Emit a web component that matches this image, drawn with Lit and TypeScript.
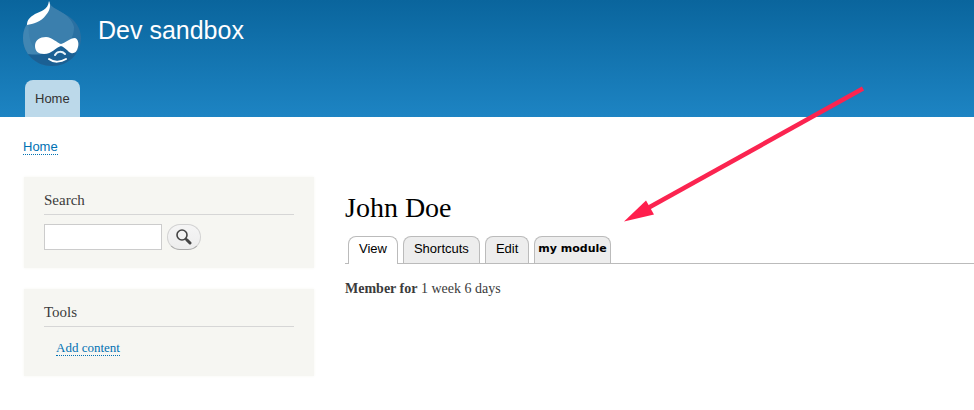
import { LitElement, html, css } from "lit";
import { customElement, state } from "lit/decorators.js";
import { classMap } from "lit/directives/class-map.js";

@customElement("site-logo")
class SiteLogo extends LitElement {
  static styles = css`
    :host { display: block; }
    svg { display: block; width: 58px; height: 66px; }
  `;
  render() {
    return html`
      <svg viewBox="0 0 58 66" role="img" aria-label="Site logo">
        <defs>
          <clipPath id="drop">
            <path d="M26 1C27 5 29 7 33 9C37 11 41 14 45 16C53 21 58 29 58 38C58 54 45 66 29 66C13 66 0 54 0 38C0 29 4 21 12 17C18 14 25 10 26 1Z" />
          </clipPath>
        </defs>
        <g clip-path="url(#drop)">
          <rect width="58" height="66" fill="#2a70a2" />
          <path d="M0 16H12C6 30 10 46 22 55L0 54Z" fill="#4186b3" />
          <path d="M26 0C34 10 49 16 51 27C51 35 48 41 42 46L22 55C8 50 4 38 6 20Z" fill="#3b7fad" />
          <path d="M0 53C10 56 20 55 28 51C33 48 36 45 40 47C46 51 49 54 53 53L58 50V66H0Z" fill="#1b6094" />
        </g>
        <path d="M26 1C28 6 27 10 23 15C18 22 10 24 4 25C4 20 7 17 12 14C18 11 25 10 26 1Z" fill="#fff" />
        <path d="M23 37C29 37 34 43 38 44C42 43 47 38 52 38C55 39 56 43 55 47C54 52 51 54 48 53C45 52 42 47 38 46C33 47 29 54 21 54C15 54 12 51 12 46C12 40 17 37 23 37Z" fill="#fff" />
        <path d="M32 55C34 51 39 51 42 54" fill="none" stroke="#e8f3fa" stroke-width="2" stroke-linecap="round" />
        <path d="M26 59C31 63 38 62 43 59" fill="none" stroke="#fff" stroke-width="2" stroke-linecap="round" />
      </svg>
    `;
  }
}

@customElement("side-block")
class SideBlock extends LitElement {
  static properties = { heading: { type: String } };
  declare heading: string;
  static styles = css`
    :host {
      display: block;
      padding: 15px 20px 18px;
      background: #f6f6f2;
      box-shadow: 0 0 3px #f6f6f2;
    }
    h2 {
      margin: 0 0 9px;
      padding-bottom: 5px;
      border-bottom: 1px solid #d6d6d6;
      font-size: 15px;
      line-height: 17px;
      font-weight: 400;
    }
  `;
  render() {
    return html`<h2>${this.heading}</h2><slot></slot>`;
  }
}

@customElement("app-root")
class AppRoot extends LitElement {
  @state() private active = "View";

  private tabs = [
    { label: "View", custom: false },
    { label: "Shortcuts", custom: false },
    { label: "Edit", custom: false },
    { label: "my module", custom: true },
  ];

  static styles = css`
    :host {
      display: block;
      position: relative;
      min-height: 100vh;
      background: #fff;
      color: #3b3b3b;
      font-family: "Liberation Serif", serif;
    }
    * { box-sizing: border-box; }
    header {
      padding: 0 23px;
      background: linear-gradient(#0a659d, #1d84c3);
    }
    .brand {
      display: flex;
      align-items: flex-start;
      gap: 17px;
      height: 80px;
    }
    .brand a {
      margin-top: 15px;
      color: #fffeff;
      font: 25px/30px "Liberation Sans", sans-serif;
      text-decoration: none;
    }
    .menu { display: flex; padding-left: 2px; }
    .menu a {
      padding: 10px 10px 9px;
      border-radius: 8px 8px 0 0;
      background: #bcd9ea;
      color: #333;
      font: 13px/18px "Liberation Sans", sans-serif;
      text-decoration: none;
    }
    .crumbs {
      display: flex;
      padding: 22px 23px;
      font: 13px/15px "Liberation Sans", sans-serif;
    }
    .link {
      border-bottom: 1px dotted #0071b3;
      color: #0071b3;
      text-decoration: none;
    }
    .columns {
      display: grid;
      grid-template-columns: 290px minmax(0, 1fr);
      gap: 31px;
      padding-left: 24px;
    }
    aside { display: flex; flex-direction: column; gap: 21px; }
    .search { display: flex; align-items: center; gap: 5px; }
    .search input {
      width: 118px;
      height: 26px;
      padding: 2px 4px;
      border: 1px solid #ccc;
      background: #fff;
      font: 13px "Liberation Sans", sans-serif;
    }
    .search button {
      display: flex;
      align-items: center;
      justify-content: center;
      width: 34px;
      height: 26px;
      padding: 0;
      border: 1px solid #d2d2d2;
      border-bottom-color: #aaa;
      border-radius: 13px;
      background: linear-gradient(#f5f5f5, #ededed);
    }
    .search svg { width: 16px; height: 16px; }
    .tools {
      display: flex;
      margin: 0;
      padding: 4px 12px 2px;
      list-style: none;
      font-size: 13px;
      line-height: 15px;
    }
    .tools .link { display: block; }
    h1 {
      margin: 15px 0 12px;
      color: #000;
      font-size: 28px;
      line-height: 32px;
      font-weight: 400;
    }
    .tabs {
      display: flex;
      gap: 5px;
      padding-left: 3px;
      border-bottom: 1px solid #bbb;
    }
    .tab {
      height: 27px;
      padding: 0 10px 2px;
      border: 1px solid #bbb;
      border-bottom: 0;
      border-radius: 8px 8px 0 0;
      background: #ededed;
      color: #000;
      font: 13px/24px "Liberation Sans", sans-serif;
    }
    .active { height: 28px; padding-bottom: 3px; margin-bottom: -1px; background: #fff; }
    .custom {
      padding: 0 3px 2px;
      font: 700 11px/22px "DejaVu Sans", sans-serif;
    }
    .member { margin: 16px 0 0; font-size: 14px; line-height: 18px; }
    .arrow {
      position: absolute;
      top: 85px;
      left: 620px;
      width: 250px;
      height: 140px;
      pointer-events: none;
    }
  `;

  render() {
    return html`
      <header>
        <div class="brand">
          <site-logo></site-logo>
          <a href="#">Dev sandbox</a>
        </div>
        <nav class="menu" aria-label="Main"><a href="#">Home</a></nav>
      </header>
      <nav class="crumbs" aria-label="Breadcrumb"><a class="link" href="#">Home</a></nav>
      <div class="columns">
        <aside>
          <side-block heading="Search">
            <form class="search" @submit=${(e: Event) => e.preventDefault()}>
              <input type="search" aria-label="Search" />
              <button aria-label="Search">
                <svg viewBox="0 0 16 16" fill="none" stroke="#444" aria-hidden="true">
                  <circle cx="6" cy="6" r="5" stroke-width="1.6" />
                  <path d="M9.5 9.5L11 11" stroke-width="2" />
                  <path d="M11 11L14 14" stroke-width="3" stroke-linecap="round" />
                </svg>
              </button>
            </form>
          </side-block>
          <side-block heading="Tools">
            <ul class="tools"><li><a class="link" href="#">Add content</a></li></ul>
          </side-block>
        </aside>
        <main>
          <h1>John Doe</h1>
          <div class="tabs" role="tablist">
            ${this.tabs.map(
              (t) => html`<button
                role="tab"
                aria-selected=${this.active === t.label}
                class=${classMap({ tab: true, active: this.active === t.label, custom: t.custom })}
                @click=${() => (this.active = t.label)}
              >${t.label}</button>`
            )}
          </div>
          <p class="member"><b>Member for</b> 1 week 6 days</p>
        </main>
      </div>
      <svg class="arrow" viewBox="0 0 250 140" aria-hidden="true">
        <path d="M243 3.5L28 123" fill="none" stroke="#fb2450" stroke-width="4.6" />
        <path d="M4 136.5L26 115.5L34 129.5Z" fill="#ff1f4d" />
      </svg>
    `;
  }
}
